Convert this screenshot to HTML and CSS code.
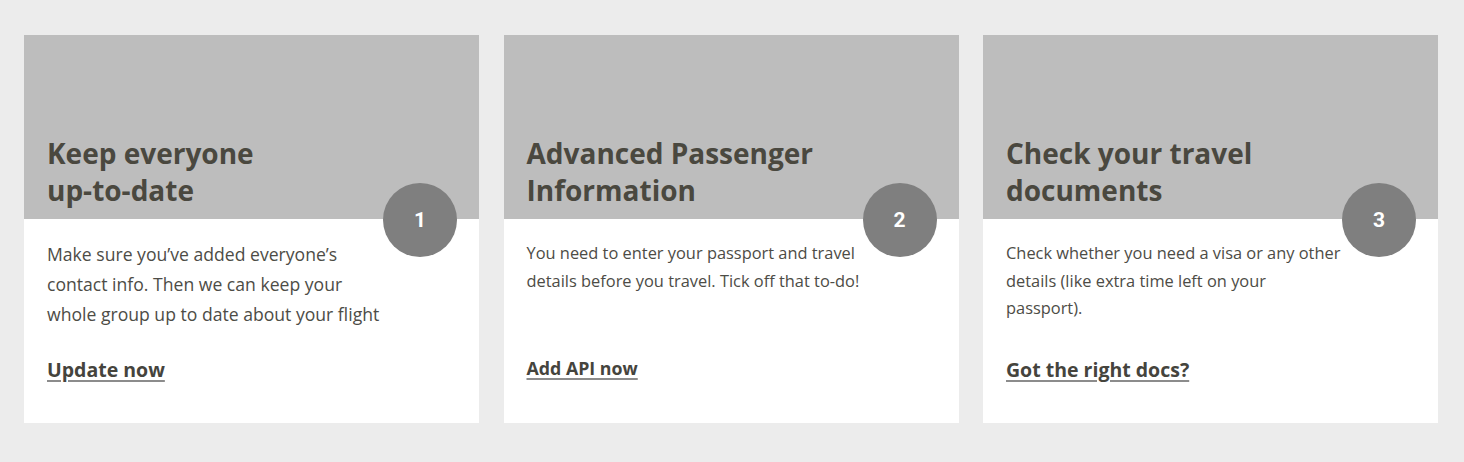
FILE: index.html
```html
<!DOCTYPE html>
<html lang="en">
<head>
<meta charset="utf-8">
<title>Steps</title>
<link rel="stylesheet" href="styles.css">
</head>
<body>
<main class="cards">
  <article class="card card--large">
    <div class="card-head">
      <h2 class="card-title">Keep everyone<br>up-to-date</h2>
      <span class="step">1</span>
    </div>
    <div class="card-body">
      <p class="card-text">Make sure you’ve added everyone’s contact info. Then we can keep your whole group up to date about your flight</p>
      <a class="card-link" href="#">Update now</a>
    </div>
  </article>
  <article class="card card--small">
    <div class="card-head">
      <h2 class="card-title">Advanced Passenger<br>Information</h2>
      <span class="step">2</span>
    </div>
    <div class="card-body">
      <p class="card-text">You need to enter your passport and travel details before you travel. Tick off that to-do!</p>
      <a class="card-link" href="#">Add API now</a>
    </div>
  </article>
  <article class="card card--medium">
    <div class="card-head">
      <h2 class="card-title">Check your travel<br>documents</h2>
      <span class="step">3</span>
    </div>
    <div class="card-body">
      <p class="card-text">Check whether you need a visa or any other details (like extra time left on your passport).</p>
      <a class="card-link" href="#">Got the right docs?</a>
    </div>
  </article>
</main>
</body>
</html>
```

FILE: styles.css
```css
* { box-sizing: border-box; }

html, body {
  margin: 0;
  padding: 0;
  background: #ececec;
}

body {
  font-family: "Open Sans", "Liberation Sans", sans-serif;
  color: #4b4942;
}

.cards {
  display: grid;
  grid-template-columns: repeat(3, 1fr);
  column-gap: 24.5px;
  padding: 35px 26px 39px 24px;
}

.card {
  position: relative;
  background: #ffffff;
  height: 388px;
  display: flex;
  flex-direction: column;
}

.card-head {
  position: relative;
  height: 184px;
  flex: 0 0 184px;
  background: #bdbdbd;
  display: flex;
  align-items: flex-end;
  padding: 0 23px 10px;
}

.card-title {
  margin: 0;
  font-size: 28px;
  line-height: 37px;
  font-weight: 700;
  color: #4a483f;
}

.step {
  position: absolute;
  right: 22px;
  bottom: -38px;
  width: 74px;
  height: 74px;
  border-radius: 50%;
  background: #7f7f7f;
  color: #ffffff;
  font-family: Roboto, "Liberation Sans", sans-serif;
  font-weight: 700;
  font-size: 21px;
  display: flex;
  align-items: center;
  justify-content: center;
}

.card-body {
  flex: 1;
  display: flex;
  flex-direction: column;
  align-items: flex-start;
  padding: 20px 23px 41px;
}

.card-text {
  margin: 0;
  max-width: 338px;
  font-size: 16.4px;
  line-height: 27.5px;
  color: #4d4c46;
}

.card-link {
  margin-top: auto;
  display: block;
  font-size: 19.5px;
  line-height: 24px;
  font-weight: 700;
  color: #45443d;
  text-decoration: underline;
  text-decoration-color: #8c8c8c;
  text-decoration-thickness: 2px;
  text-underline-offset: 3px;
}

.card--large .card-text {
  font-size: 17.6px;
  line-height: 30px;
}

.card--small .card-link {
  font-size: 17.8px;
  margin-bottom: 2px;
}
```
